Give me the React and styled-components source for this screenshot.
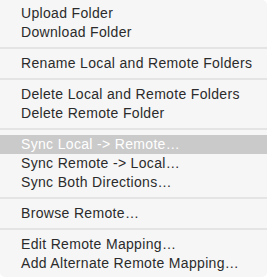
import React from 'react';
import styled, { createGlobalStyle } from 'styled-components';

const GlobalStyle = createGlobalStyle`
  html, body {
    margin: 0;
    padding: 0;
    background: #ffffff;
  }
`;

const MenuStyle = styled.div`
  width: 267px;
  box-sizing: border-box;
  padding: 4px 0 4px 0;
  background: #f6f6f6;
  border-radius: 0 5px 5px 5px;
  font-family: "Liberation Sans", Arial, sans-serif;
  font-size: 14px;
  letter-spacing: 0.33px;
  color: #2b2b2b;
`;

const ItemStyle = styled.div`
  height: 19px;
  line-height: 19px;
  padding-left: 21px;
  white-space: nowrap;
  background: ${(props) => (props.$active ? '#cacaca' : 'transparent')};
  color: ${(props) => (props.$active ? '#ffffff' : '#2b2b2b')};
`;

const SeparatorStyle = styled.div`
  height: 12px;
  display: flex;
  align-items: center;
  &::after {
    content: '';
    flex: 1;
    height: 2px;
    background: #e4e4e4;
  }
`;

const groups = [
  ['Upload Folder', 'Download Folder'],
  ['Rename Local and Remote Folders'],
  ['Delete Local and Remote Folders', 'Delete Remote Folder'],
  ['Sync Local -> Remote…', 'Sync Remote -> Local…', 'Sync Both Directions…'],
  ['Browse Remote…'],
  ['Edit Remote Mapping…', 'Add Alternate Remote Mapping…'],
];

const App = () => {
  return (
    <>
      <GlobalStyle />
      <MenuStyle>
        {groups.map((group, i) => (
          <React.Fragment key={i}>
            {i > 0 && <SeparatorStyle />}
            {group.map((label) => (
              <ItemStyle key={label} $active={label === 'Sync Local -> Remote…'}>
                {label}
              </ItemStyle>
            ))}
          </React.Fragment>
        ))}
      </MenuStyle>
    </>
  );
};

export default App;
